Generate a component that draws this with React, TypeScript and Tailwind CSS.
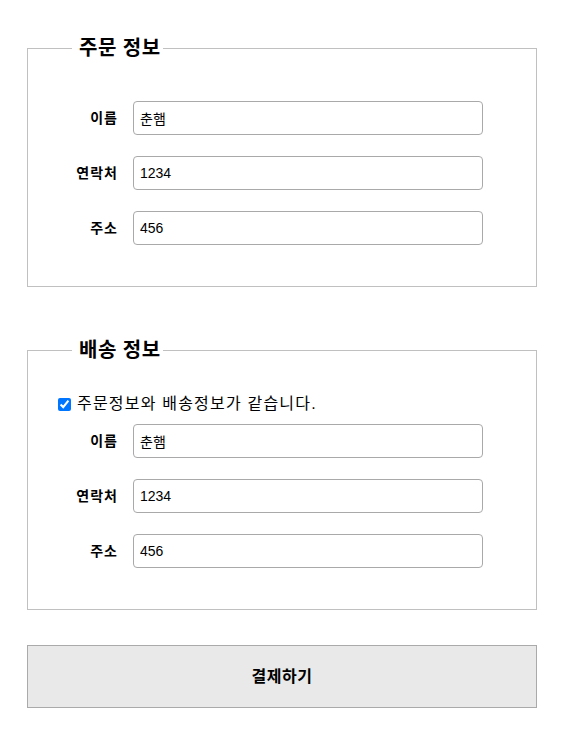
import { useState } from "react";

type Info = { name: string; phone: string; address: string };

const FONT = { fontFamily: '"Liberation Sans", "Noto Sans CJK KR", sans-serif' };

function Field({ label, value, onChange }: { label: string; value: string; onChange: (v: string) => void }) {
  return (
    <div className="flex items-center">
      <label className="w-[90px] text-right text-[14px] font-bold tracking-[1px] text-black">{label}</label>
      <input
        type="text"
        value={value}
        onChange={(e) => onChange(e.target.value)}
        className="ml-[15px] h-[34px] w-[350px] rounded-[4px] border border-[#a9a9a9] bg-white px-[6px] text-[14px] text-black outline-none"
      />
    </div>
  );
}

function InfoFields({ info, setInfo }: { info: Info; setInfo: (i: Info) => void }) {
  return (
    <div className="flex flex-col gap-[21px]">
      <Field label="이름" value={info.name} onChange={(v) => setInfo({ ...info, name: v })} />
      <Field label="연락처" value={info.phone} onChange={(v) => setInfo({ ...info, phone: v })} />
      <Field label="주소" value={info.address} onChange={(v) => setInfo({ ...info, address: v })} />
    </div>
  );
}

export default function App() {
  const [order, setOrder] = useState<Info>({ name: "춘햄", phone: "1234", address: "456" });
  const [ship, setShip] = useState<Info>({ name: "춘햄", phone: "1234", address: "456" });
  const [same, setSame] = useState(true);

  const shipping = same ? order : ship;

  return (
    <div className="min-h-screen bg-white px-[27px] pt-[34px] text-black" style={FONT}>
      <div className="w-[510px]">
        {/* 주문 정보 */}
        <fieldset className="border border-[#c0c0c0] pb-[41px] pt-[39px]">
          <legend className="ml-[44px] pl-[7px] pr-[2px] text-[20px] font-bold leading-[28px] tracking-[0.5px]">주문 정보</legend>
          <InfoFields info={order} setInfo={setOrder} />
        </fieldset>

        {/* 배송 정보 */}
        <fieldset className="mt-[49px] border border-[#c0c0c0] pb-[41px] pt-[28px]">
          <legend className="ml-[44px] pl-[7px] pr-[2px] text-[20px] font-bold leading-[28px] tracking-[0.5px]">배송 정보</legend>
          <label className="flex h-[24px] items-center pl-[30px] text-[16px]">
            <input
              type="checkbox"
              checked={same}
              onChange={(e) => setSame(e.target.checked)}
              className="h-[13px] w-[13px] accent-[#0075ff]"
            />
            <span className="ml-[6px] tracking-[1.2px]">주문정보와 배송정보가 같습니다.</span>
          </label>
          <div className="mt-[8px]">
            <InfoFields info={shipping} setInfo={setShip} />
          </div>
        </fieldset>

        <button
          type="button"
          className="mt-[35px] h-[63px] w-full border border-[#aaaaaa] bg-[#e9e9e9] text-[16px] font-bold tracking-[0.5px]"
        >
          결제하기
        </button>
      </div>
    </div>
  );
}
